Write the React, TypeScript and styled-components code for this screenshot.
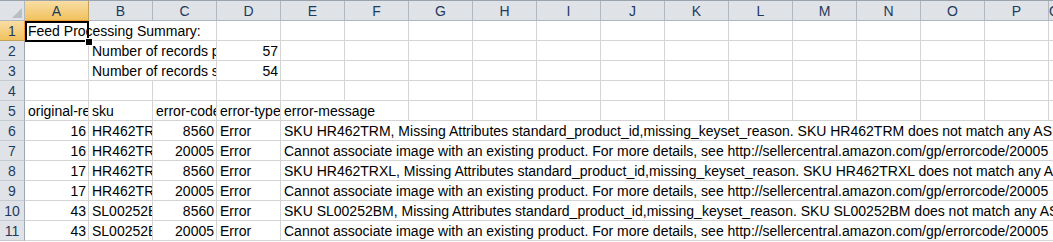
import styled, { createGlobalStyle } from "styled-components";

const GlobalStyle = createGlobalStyle`
  html, body {
    margin: 0;
    padding: 0;
    background: #fff;
  }
  body {
    font-family: "Liberation Sans", Arial, sans-serif;
  }
`;

const COLUMNS = ["A", "B", "C", "D", "E", "F", "G", "H", "I", "J", "K", "L", "M", "N", "O", "P", "Q"];

type CellData = {
  text?: string;
  align?: "left" | "right";
  span?: number;
};

// pad a row with empty cells so every row fills all columns
function fill(cells: CellData[]): CellData[] {
  const out = [...cells];
  let used = out.reduce((n, c) => n + (c.span || 1), 0);
  while (used < COLUMNS.length) {
    out.push({});
    used++;
  }
  return out;
}

// span merges the empty cells that a text runs over
const rows: CellData[][] = [
  fill([{ text: "Feed Processing Summary:", span: 3 }]),
  fill([{}, { text: "Number of records processed", span: 2 }, { text: "57", align: "right" }]),
  fill([{}, { text: "Number of records successful", span: 2 }, { text: "54", align: "right" }]),
  fill([]),
  fill([
    { text: "original-record-number" },
    { text: "sku" },
    { text: "error-code" },
    { text: "error-type" },
    { text: "error-message", span: 2 },
  ]),
];

const messages: [string, string, string, string][] = [
  ["16", "HR462TRM", "8560", "SKU HR462TRM, Missing Attributes standard_product_id,missing_keyset_reason. SKU HR462TRM does not match any ASIN. Creation of a new ASIN requires the missing attributes."],
  ["16", "HR462TRM", "20005", "Cannot associate image with an existing product. For more details, see http://sellercentral.amazon.com/gp/errorcode/20005"],
  ["17", "HR462TRXL", "8560", "SKU HR462TRXL, Missing Attributes standard_product_id,missing_keyset_reason. SKU HR462TRXL does not match any ASIN. Creation of a new ASIN requires the missing attributes."],
  ["17", "HR462TRXL", "20005", "Cannot associate image with an existing product. For more details, see http://sellercentral.amazon.com/gp/errorcode/20005"],
  ["43", "SL00252BM", "8560", "SKU SL00252BM, Missing Attributes standard_product_id,missing_keyset_reason. SKU SL00252BM does not match any ASIN. Creation of a new ASIN requires the missing attributes."],
  ["43", "SL00252BM", "20005", "Cannot associate image with an existing product. For more details, see http://sellercentral.amazon.com/gp/errorcode/20005"],
];

messages.forEach(([rec, sku, code, msg]) => {
  rows.push(
    fill([
      { text: rec, align: "right" },
      { text: sku },
      { text: code, align: "right" },
      { text: "Error" },
      { text: msg, span: 13 },
    ])
  );
});

export default function App() {
  return (
    <>
      <GlobalStyle />
      <Sheet>
        <Corner>
          <svg width="12" height="12" viewBox="0 0 12 12">
            <polygon points="11,1 11,11 1,11" fill="#b9bec4" />
          </svg>
        </Corner>
        {COLUMNS.map((c) => (
          <ColHeader key={c} $selected={c === "A"}>
            {c}
          </ColHeader>
        ))}

        {rows.map((cells, r) => (
          <Row key={r} cells={cells} index={r + 1} />
        ))}

        <Selection>
          <FillHandle />
        </Selection>
      </Sheet>
    </>
  );
}

function Row({ cells, index }: { cells: CellData[]; index: number }) {
  return (
    <>
      <RowHeader $selected={index === 1}>{index}</RowHeader>
      {cells.map((cell, i) => (
        <Cell key={i} $align={cell.align || "left"} $span={cell.span || 1}>
          {cell.text}
        </Cell>
      ))}
    </>
  );
}

const Sheet = styled.div`
  position: relative;
  display: grid;
  grid-template-columns: 25px repeat(16, 64px) 1fr;
  grid-template-rows: 20px;
  grid-auto-rows: 20px;
  width: 100%;
  overflow: hidden;
  border-top: 1px solid #9ba3ad;
  font-family: "Liberation Sans", Arial, sans-serif;
  font-size: 14px;
  color: #000;
`;

const Corner = styled.div`
  background: #dfe3e8;
  border-right: 1px solid #b1b7bf;
  border-bottom: 1px solid #b1b7bf;
  display: flex;
  align-items: flex-end;
  justify-content: flex-end;
  padding: 0 1px 1px 0;
  box-sizing: border-box;
`;

const ColHeader = styled.div<{ $selected?: boolean }>`
  box-sizing: border-box;
  display: flex;
  align-items: center;
  justify-content: center;
  background: ${(p) =>
    p.$selected ? "linear-gradient(#f9dda5, #f1c25e)" : "#dfe3e8"};
  border-right: 1px solid ${(p) => (p.$selected ? "#c2a25b" : "#b1b7bf")};
  border-bottom: 1px solid ${(p) => (p.$selected ? "#f29536" : "#b1b7bf")};
  color: #1f3a5c;
  font-size: 14px;
`;

const RowHeader = styled.div<{ $selected?: boolean }>`
  box-sizing: border-box;
  display: flex;
  align-items: center;
  justify-content: center;
  background: ${(p) =>
    p.$selected ? "linear-gradient(#f9dda5, #f1c25e)" : "#dfe3e8"};
  border-right: 1px solid ${(p) => (p.$selected ? "#f29536" : "#9ea6b0")};
  border-bottom: 1px solid ${(p) => (p.$selected ? "#c2a25b" : "#c5cad0")};
  color: #1f3a5c;
  font-size: 14px;
  padding-top: 1px;
`;

const Cell = styled.div<{ $align: "left" | "right"; $span: number }>`
  grid-column: span ${(p) => p.$span};
  box-sizing: border-box;
  border-right: 1px solid #d4d4d4;
  border-bottom: 1px solid #d4d4d4;
  padding: 1px 2px 0 3px;
  white-space: nowrap;
  overflow: hidden;
  text-align: ${(p) => p.$align};
  line-height: 19px;
`;

const Selection = styled.div`
  position: absolute;
  left: 25px;
  top: 20px;
  width: 64px;
  height: 21px;
  box-sizing: border-box;
  border: 2px solid #000;
  pointer-events: none;
`;

const FillHandle = styled.div`
  position: absolute;
  right: -5px;
  bottom: -5px;
  width: 6px;
  height: 6px;
  background: #000;
  box-shadow: 0 0 0 1px #fff;
`;
